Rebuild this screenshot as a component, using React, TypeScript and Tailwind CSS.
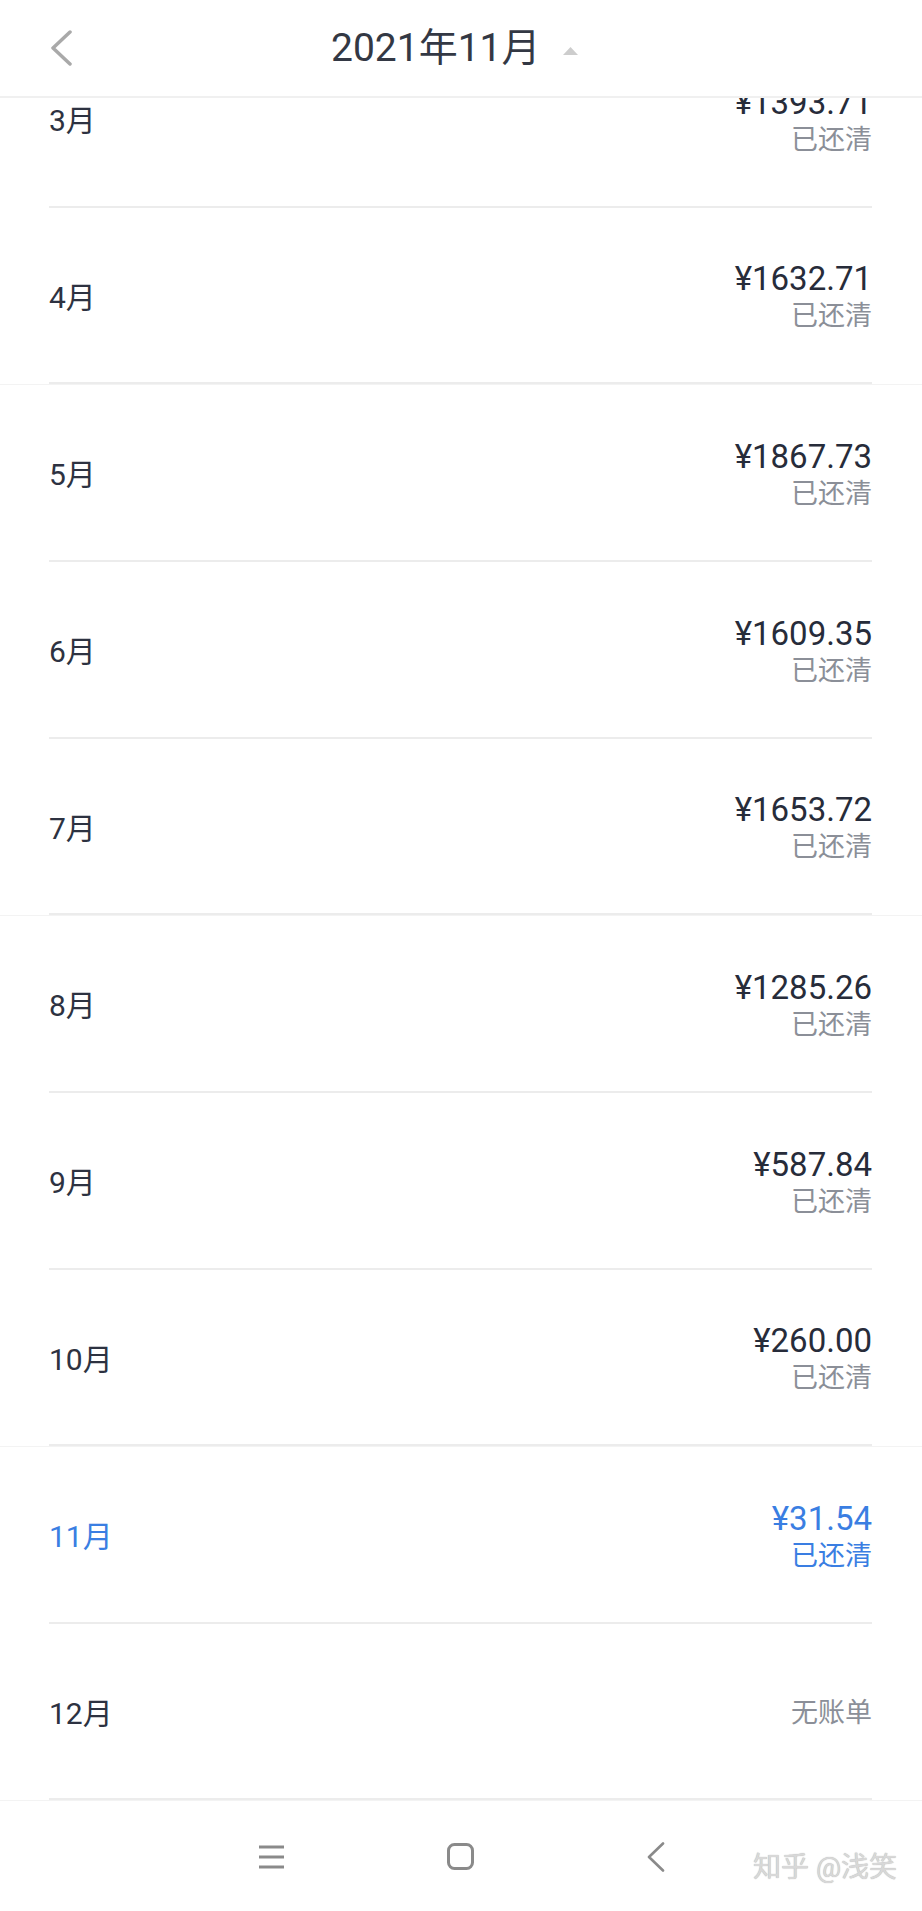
import React from "react";

type Row = {
  month: string;
  amount?: string;
  status: string;
  active?: boolean;
  faint?: boolean;
};

const rows: Row[] = [
  { month: "3月", amount: "¥1393.71", status: "已还清" },
  { month: "4月", amount: "¥1632.71", status: "已还清", faint: true },
  { month: "5月", amount: "¥1867.73", status: "已还清" },
  { month: "6月", amount: "¥1609.35", status: "已还清" },
  { month: "7月", amount: "¥1653.72", status: "已还清", faint: true },
  { month: "8月", amount: "¥1285.26", status: "已还清" },
  { month: "9月", amount: "¥587.84", status: "已还清" },
  { month: "10月", amount: "¥260.00", status: "已还清", faint: true },
  { month: "11月", amount: "¥31.54", status: "已还清", active: true },
  { month: "12月", status: "无账单", faint: true },
];

function ListRow({ row }: { row: Row }) {
  const labelColor = row.active ? "text-[#3a7ee2]" : "text-[#2d3241]";
  const amountColor = row.active ? "text-[#3a7ee2]" : "text-[#272c3a]";
  const statusColor = row.active ? "text-[#3a7ee2]" : "text-[#8b8f98]";
  return (
    <div className={row.faint ? "border-b border-[#f3f3f3]" : ""}>
      <div
        className={`ml-[49px] mr-[50px] flex items-center justify-between border-b-2 border-[#ececec] ${
          row.faint ? "h-[176px]" : "h-[177px]"
        }`}
      >
        <span className={`mt-[5px] text-[30px] leading-[34px] ${labelColor}`}>{row.month}</span>
        {row.amount ? (
          <div className="mt-[4px] flex flex-col items-end">
            <span className={`text-[33px] leading-[38px] ${amountColor}`}>{row.amount}</span>
            <span className={`text-[27px] leading-[36px] ${statusColor}`}>{row.status}</span>
          </div>
        ) : (
          <span className={`mt-[4px] text-[27px] leading-[32px] ${statusColor}`}>{row.status}</span>
        )}
      </div>
    </div>
  );
}

export default function App() {
  return (
    <div
      className="relative w-[922px] h-[1911px] overflow-hidden bg-white"
      style={{ fontFamily: 'Roboto, "Noto Sans CJK SC", sans-serif' }}
    >
      {/* Header overlay */}
      <div className="absolute top-0 left-0 right-0 z-10 h-[98px] bg-white border-b-2 border-[#f0f0f0] flex items-center pl-[50px]">
        <svg width="22" height="36" viewBox="0 0 22 36" fill="none">
          <polyline
            points="20,2 3,18 20,34"
            stroke="#a9a9a9"
            strokeWidth="3.5"
            strokeLinecap="round"
            strokeLinejoin="round"
          />
        </svg>
        <div className="ml-[259px] flex items-center">
          <span className="text-[39px] leading-[44px] text-[#333844]">2021年11月</span>
          <svg className="ml-[22px] mt-[6px]" width="15" height="8" viewBox="0 0 15 8">
            <polygon points="7.5,0 15,8 0,8" fill="#cdcdcd" />
          </svg>
        </div>
      </div>

      {/* List */}
      <div className="pt-[31px]">
        {rows.map((r) => (
          <ListRow key={r.month} row={r} />
        ))}
      </div>

      {/* Bottom nav bar */}
      <div className="h-[111px] bg-white flex items-center pl-[258px]">
        <svg width="27" height="24" viewBox="0 0 27 24" fill="none">
          <line x1="1" y1="2" x2="26" y2="2" stroke="#8a8a8a" strokeWidth="3" />
          <line x1="1" y1="12" x2="26" y2="12" stroke="#8a8a8a" strokeWidth="3" />
          <line x1="1" y1="22" x2="26" y2="22" stroke="#8a8a8a" strokeWidth="3" />
        </svg>
        <svg className="ml-[162px]" width="28" height="28" viewBox="0 0 28 28" fill="none">
          <rect x="1.5" y="1.5" width="24" height="24" rx="6" stroke="#8a8a8a" strokeWidth="3" />
        </svg>
        <svg className="ml-[172px]" width="18" height="30" viewBox="0 0 18 30" fill="none">
          <polyline
            points="16,1.5 2,15 16,28.5"
            stroke="#8a8a8a"
            strokeWidth="2.6"
            strokeLinecap="round"
            strokeLinejoin="round"
          />
        </svg>
      </div>

      {/* Watermark overlay */}
      <div
        className="absolute left-[753px] top-[1852px] text-[28px] leading-[32px] text-[#d8d8d8] whitespace-nowrap"
        style={{ textShadow: "0 0 1px #a8a8a8" }}
      >
        知乎 @浅笑
      </div>
    </div>
  );
}
